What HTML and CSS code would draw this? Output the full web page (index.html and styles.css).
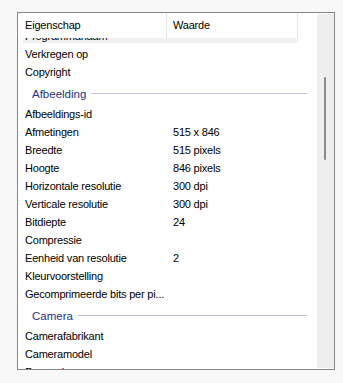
FILE: index.html
```html
<!DOCTYPE html>
<html lang="nl">
<head>
<meta charset="utf-8">
<title>Eigenschappen</title>
<link rel="stylesheet" href="styles.css">
</head>
<body>
<div class="panel">
  <div class="list">
    <div class="header">
      <div class="hcell c1">Eigenschap</div>
      <div class="hcell c2">Waarde</div>
    </div>
    <div class="rows">
      <div class="row first"><span>Programmanaam</span><span></span></div>
      <div class="row"><span>Verkregen op</span><span></span></div>
      <div class="row"><span>Copyright</span><span></span></div>
      <div class="group"><span class="gtitle">Afbeelding</span><span class="gline"></span></div>
      <div class="row"><span>Afbeeldings-id</span><span></span></div>
      <div class="row"><span>Afmetingen</span><span>515 x 846</span></div>
      <div class="row"><span>Breedte</span><span>515 pixels</span></div>
      <div class="row"><span>Hoogte</span><span>846 pixels</span></div>
      <div class="row"><span>Horizontale resolutie</span><span>300 dpi</span></div>
      <div class="row"><span>Verticale resolutie</span><span>300 dpi</span></div>
      <div class="row"><span>Bitdiepte</span><span>24</span></div>
      <div class="row"><span>Compressie</span><span></span></div>
      <div class="row"><span>Eenheid van resolutie</span><span>2</span></div>
      <div class="row"><span>Kleurvoorstelling</span><span></span></div>
      <div class="row"><span>Gecomprimeerde bits per pi...</span><span></span></div>
      <div class="group"><span class="gtitle">Camera</span><span class="gline"></span></div>
      <div class="row"><span>Camerafabrikant</span><span></span></div>
      <div class="row"><span>Cameramodel</span><span></span></div>
      <div class="row"><span>F-waarde</span><span></span></div>
    </div>
  </div>
  <div class="scrollbar"><div class="thumb"></div></div>
</div>
</body>
</html>
```
FILE: styles.css
```css
html, body {
  margin: 0;
  padding: 0;
  background: #f8f8f8;
}
body {
  font-family: "Liberation Sans", Arial, sans-serif;
  font-size: 11px;
  color: #000;
}
.panel {
  margin: 12px 0 0 17px;
  width: 318px;
  height: 358px;
  box-sizing: border-box;
  border: 1px solid #868686;
  background: #fff;
  display: flex;
}
.list {
  flex: 0 0 299px;
  display: flex;
  flex-direction: column;
  overflow: hidden;
}
.header {
  flex: none;
  height: 25px;
  display: flex;
}
.hcell {
  line-height: 25px;
  border-right: 1px solid #e5e5e5;
  white-space: nowrap;
  letter-spacing: -0.2px;
}
.c1 {
  width: 141px;
  padding-left: 7px;
}
.c2 {
  width: 124px;
  padding-left: 6px;
}
.rows {
  flex: 1;
  overflow: hidden;
}
.row {
  height: 18px;
  box-sizing: border-box;
  margin-left: 5px;
  width: 275px;
  padding: 2px 0 0 2px;
  display: grid;
  grid-template-columns: 148px 1fr;
  line-height: 18px;
  white-space: nowrap;
  letter-spacing: -0.2px;
}
.row span {
  overflow: hidden;
  height: 16px;
}
.first {
  margin-top: -13px;
  background: #f0f0f0;
}
.group {
  height: 24px;
  box-sizing: border-box;
  padding: 4px 10px 0 14px;
  display: flex;
  align-items: center;
  color: #1e3287;
  font-size: 11.5px;
}
.gtitle {
  position: relative;
  top: 1px;
}
.gline {
  flex: 1;
  height: 1px;
  margin-left: 5px;
  background: #b9c2da;
}
.scrollbar {
  flex: 0 0 17px;
  margin: 1px 0;
  background: #eeeeee;
}
.thumb {
  margin: 63px 0 0 7px;
  width: 2px;
  height: 83px;
  border-radius: 1px;
  background: #8a8a8a;
}
```
